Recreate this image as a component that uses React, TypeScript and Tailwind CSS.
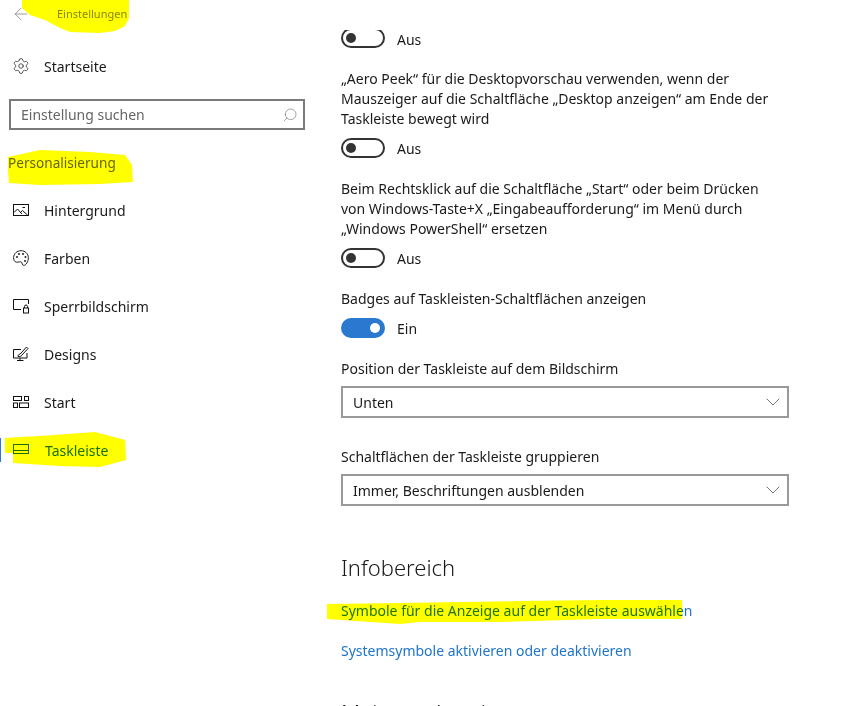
import { ArrowLeft, ChevronDown, Search, Settings } from 'lucide-react';

const font = "font-['Noto_Sans',sans-serif]";

function IconPicture() {
    return (
        <svg width="16" height="16" viewBox="0 0 16 16" fill="none" stroke="#111" strokeWidth="1">
            <rect x=".5" y="2.5" width="15" height="11" />
            <path d="M1 10.500l3.500-3.500 4.500 5M7.500 10.500l2-2 5 4.500M9.500 5.500h2.500" />
        </svg>
    );
}

function IconPalette() {
    return (
        <svg width="16" height="16" viewBox="0 0 16 16" fill="none" stroke="#222" strokeWidth="1">
            <path d="M8 .7c4 0 7.400 3 7.400 7 0 4-2.600 7.700-4.600 7.700-2 0-1.300-2.400-2.400-3.300-1.200-1-2.800.4-5 .1C1.300 12 .6 9.500.6 7.700.6 3.700 4 .7 8 .7z" />
            <circle cx="4" cy="7" r="1" fill="#222" stroke="none" />
            <circle cx="6" cy="4" r="1" fill="#222" stroke="none" />
            <circle cx="10" cy="4" r="1" fill="#222" stroke="none" />
            <circle cx="12.500" cy="7" r="1" fill="#222" stroke="none" />
            <circle cx="12" cy="11" r="1" fill="#222" stroke="none" />
        </svg>
    );
}

function IconLock() {
    return (
        <svg width="16" height="16" viewBox="0 0 16 16" fill="none" stroke="#111" strokeWidth="1">
            <path d="M8 11.500H.5v-10h15V6" />
            <rect x="10.500" y="10" width="5" height="5" />
            <path d="M11.500 10V8.500a1.500 1.500 0 0 1 3 0V10" />
        </svg>
    );
}

function IconDesign() {
    return (
        <svg width="16" height="16" viewBox="0 0 16 16" fill="none" stroke="#111" strokeWidth="1">
            <path d="M8 3.500H.5v8.500h13.500V7M7 12v2.500M4 14.500h6.500" />
            <path d="M5 10.500c0-1.500.8-2.300 2-2.300L13.500 1l1.500 1.500-6.300 6.800c0 1-1.200 1.200-3.700 1.200z" />
        </svg>
    );
}

function IconStart() {
    return (
        <svg width="16" height="16" viewBox="0 0 16 16" fill="none" stroke="#111" strokeWidth="1">
            <rect x=".5" y="2.500" width="8" height="4" />
            <rect x="11.500" y="2.500" width="4" height="4" />
            <rect x=".5" y="9" width="4" height="4.500" />
            <rect x="6.500" y="9" width="9" height="4.500" />
        </svg>
    );
}

function IconTaskbar() {
    return (
        <svg width="16" height="16" viewBox="0 0 16 16" fill="none" stroke="#1a6fb0" strokeWidth="1">
            <rect x=".5" y="2.500" width="15" height="9" />
            <path d="M1 8.500h14" />
        </svg>
    );
}

const navItems = [
    { label: 'Hintergrund', icon: <IconPicture /> },
    { label: 'Farben', icon: <IconPalette /> },
    { label: 'Sperrbildschirm', icon: <IconLock /> },
    { label: 'Designs', icon: <IconDesign /> },
    { label: 'Start', icon: <IconStart /> },
    { label: 'Taskleiste', icon: <IconTaskbar />, active: true }
];

function Toggle({ on = false, cut = false, label }: { on?: boolean; cut?: boolean; label: string }) {
    const track = (
        <div
            className={
                on
                    ? 'flex h-5 w-11 shrink-0 items-center justify-end rounded-full bg-[#2a78d0] pr-[5px]'
                    : 'flex h-5 w-11 shrink-0 items-center rounded-full border-2 border-[#333] pl-[3px]'
            }
        >
            <div className={on ? 'h-2.5 w-2.5 rounded-full bg-white' : 'h-2.5 w-2.5 rounded-full bg-[#333]'} />
        </div>
    );

    return (
        <div className={cut ? 'flex h-[18px] items-center gap-[12px]' : 'flex h-5 items-center gap-[12px]'}>
            {cut ? <div className="flex h-[18px] items-end overflow-hidden">{track}</div> : track}
            <span className="pt-px text-[14px] leading-5">{label}</span>
        </div>
    );
}

function Dropdown({ value }: { value: string }) {
    return (
        <div className="flex h-8 w-[448px] items-center justify-between border-2 border-[#999] pl-[10px] pr-[2px] text-[14px]">
            <span>{value}</span>
            <ChevronDown className="h-6 w-6 text-[#777]" strokeWidth={1} />
        </div>
    );
}

export default function App() {
    return (
        <div className={`relative flex h-[706px] w-[853px] overflow-hidden bg-white text-[#1a1a1a] ${font}`}>
            {/* Sidebar */}
            <div className="w-[341px] shrink-0">
                <div className="flex h-[28px] items-center pl-[11px]">
                    <ArrowLeft className="h-5 w-5 text-[#888]" strokeWidth={1} />
                    <span className="ml-[26px] text-[11px] text-[#888]">Einstellungen</span>
                </div>
                <div className="mt-[14px] flex h-12 items-center gap-[14px] pl-[12px] text-[14px]">
                    <Settings className="h-[18px] w-[18px] text-[#222]" strokeWidth={1} />
                    <span>Startseite</span>
                </div>
                <div className="ml-[9px] mt-[9px] flex h-[31px] w-[296px] items-center justify-between border-2 border-[#7a7a7a] pl-[10px] pr-[5px] text-[14px] text-[#666]">
                    <span>Einstellung suchen</span>
                    <Search className="h-4 w-4 -scale-x-100 text-[#777]" strokeWidth={1} />
                </div>
                <div className="ml-[8px] mt-[23px] text-[13.6px] leading-5 text-[#666]">Personalisierung</div>
                <div className="mt-[13px]">
                    {navItems.map((item) => (
                        <div key={item.label} className="relative flex h-12 items-center gap-[15px] pl-[13px] text-[14px]">
                            {item.active && <div className="absolute left-0 top-[12px] h-6 w-px bg-[#2a78d0]" />}
                            {item.icon}
                            <span className={item.active ? 'pl-px text-[#1a6fb0]' : ''}>{item.label}</span>
                        </div>
                    ))}
                </div>
            </div>

            {/* Main column */}
            <div className="flex-1 pt-[30px]">
                <Toggle cut label="Aus" />
                <p className="mt-[21px] text-[14px] leading-5">
                    „Aero Peek“ für die Desktopvorschau verwenden, wenn der
                    <br />
                    Mauszeiger auf die Schaltfläche „Desktop anzeigen“ am Ende der
                    <br />
                    Taskleiste bewegt wird
                </p>
                <div className="mt-[9px]">
                    <Toggle label="Aus" />
                </div>
                <p className="mt-[21px] text-[14px] leading-5">
                    Beim Rechtsklick auf die Schaltfläche „Start“ oder beim Drücken
                    <br />
                    von Windows-Taste+X „Eingabeaufforderung“ im Menü durch
                    <br />
                    „Windows PowerShell“ ersetzen
                </p>
                <div className="mt-[9px]">
                    <Toggle label="Aus" />
                </div>
                <p className="mt-[21px] text-[14px] leading-5">Badges auf Taskleisten-Schaltflächen anzeigen</p>
                <div className="mt-[9px]">
                    <Toggle on label="Ein" />
                </div>
                <p className="mt-[21px] text-[14px] leading-5">Position der Taskleiste auf dem Bildschirm</p>
                <div className="mt-[7px]">
                    <Dropdown value="Unten" />
                </div>
                <p className="mt-[29px] text-[14px] leading-5">Schaltflächen der Taskleiste gruppieren</p>
                <div className="mt-[7px]">
                    <Dropdown value="Immer, Beschriftungen ausblenden" />
                </div>
                <h2 className="mt-[45px] text-[22px] font-light leading-8">Infobereich</h2>
                <p className="mt-[18px] text-[14px] leading-5 text-[#1f74cc]">Symbole für die Anzeige auf der Taskleiste auswählen</p>
                <p className="mt-[20px] text-[14px] leading-5 text-[#1f74cc]">Systemsymbole aktivieren oder deaktivieren</p>
                <h2 className="mt-[35px] text-[22px] font-light leading-8">Mehrere Anzeigen</h2>
            </div>

            {/* Yellow marker strokes drawn over the screenshot */}
            <svg className="pointer-events-none absolute left-0 top-0 mix-blend-multiply" width="853" height="706" viewBox="0 0 853 706">
                <g fill="#ffff00">
                    <path d="M22 0H129L129 18 125 26 115 31 100 33 70 32 60 28 45 20 30 15 22 8z" />
                    <path d="M8 157L40 150 90 152 125 155 132 165 133 182 100 184 40 185 9 183 8 170z" />
                    <path d="M5 438L21 437 40 436 95 432 125 440 126 460 100 467 60 466 13 463 13 453 5 453z" />
                    <path d="M327 604L400 603 520 601 600 600 682 600 682 619 600 619 500 622 420 622 400 624 327 619z" />
                </g>
            </svg>
        </div>
    );
}
